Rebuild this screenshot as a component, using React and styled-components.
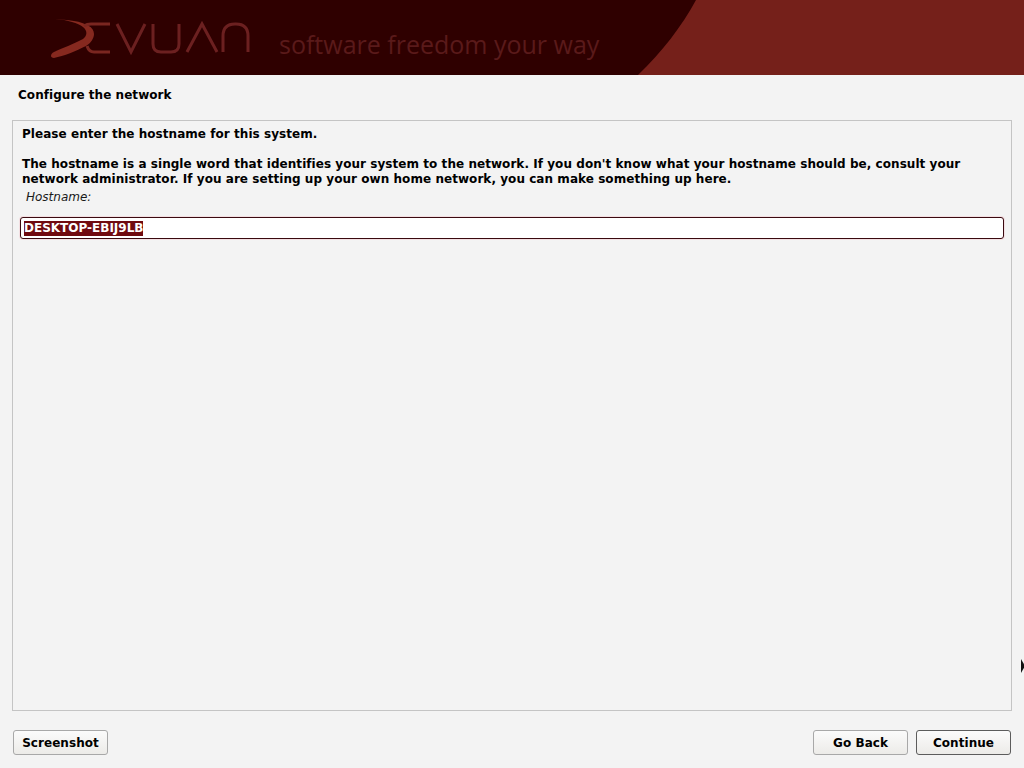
import React from 'react';
import styled, { createGlobalStyle } from 'styled-components';

const GlobalStyle = createGlobalStyle`
  html, body {
    margin: 0;
    padding: 0;
    background: #f3f3f3;
  }
  body {
    font-family: "DejaVu Sans", sans-serif;
    color: #000;
  }
`;

const Page = styled.div`
  position: relative;
  display: flex;
  flex-direction: column;
  width: 1024px;
  height: 768px;
  overflow: hidden;
  background: #f3f3f3;
`;

const Banner = styled.header`
  position: relative;
  flex: none;
  display: flex;
  align-items: flex-start;
  height: 75px;
  background: #2f0000;
  overflow: hidden;
`;

const BannerCurve = styled.svg`
  position: absolute;
  top: 0;
  right: 0;
`;

const Logo = styled.svg`
  flex: none;
  margin: 16px 0 0 49px;
`;

const Tagline = styled.span`
  position: relative;
  margin: 28px 0 0 26px;
  font-family: "Open Sans", sans-serif;
  font-size: 25px;
  line-height: 33px;
  color: #5a1a1a;
`;

const SectionTitle = styled.h1`
  flex: none;
  margin: 0;
  padding: 12px 0 0 18px;
  height: 33px;
  font-size: 12px;
  font-weight: 700;
  line-height: 16px;
  letter-spacing: 0.05px;
`;

const Panel = styled.main`
  flex: none;
  box-sizing: border-box;
  height: 591px;
  margin: 0 12px;
  padding: 6px 7px 0 9px;
  border: 1px solid #c4c4c4;
`;

const Paragraph = styled.p`
  margin: 0 0 15px;
  font-size: 12px;
  font-weight: 700;
  line-height: 15px;
  letter-spacing: 0.05px;
`;

const FieldLabel = styled.label`
  display: block;
  margin: -12px 0 0 4px;
  font-size: 12px;
  font-style: italic;
  line-height: 15px;
  color: #1a1a1a;
`;

const HostInput = styled.div`
  box-sizing: border-box;
  display: flex;
  align-items: center;
  height: 22px;
  margin: 12px 0 0 -2px;
  padding-left: 3px;
  background: #fff;
  border: 1px solid #3a0a10;
  border-radius: 3px;
  box-shadow: 0 0 0 1px #f3dfe2;
`;

const Selected = styled.span`
  font-size: 12px;
  font-weight: 700;
  line-height: 15px;
  color: #fff;
  background: #700a10;
`;

const Footer = styled.footer`
  flex: 1;
  display: flex;
  align-items: flex-start;
  justify-content: space-between;
  padding: 19px 13px 0;
`;

const ButtonGroup = styled.div`
  display: flex;
  gap: 8px;
`;

const Button = styled.button`
  box-sizing: border-box;
  width: 95px;
  height: 25px;
  padding: 0;
  font-family: "DejaVu Sans", sans-serif;
  font-size: 12px;
  font-weight: 700;
  letter-spacing: 0.05px;
  color: #000;
  background: linear-gradient(#fbfbfb, #ecebe8);
  border: 1px solid ${({ $focused }) => ($focused ? '#5c5c5c' : '#a8a8a8')};
  border-radius: 3px;
`;

const CursorMark = styled.span`
  position: absolute;
  right: -1px;
  top: 659px;
  width: 0;
  height: 0;
  border-top: 7px solid transparent;
  border-bottom: 7px solid transparent;
  border-left: 4px solid #111;
`;

const App = () => (
  <Page>
    <GlobalStyle />
    <Banner>
      <BannerCurve width="400" height="75" viewBox="624 0 400 75">
        <path d="M696 0 C682 26 662 52 638 75 L1024 75 L1024 0 Z" fill="#75201a" />
      </BannerCurve>
      <Logo width="204" height="46" viewBox="49 16 204 46" fill="none" stroke="#6c2020" strokeWidth="3">
        <path d="M55 19 C68 20 78 23 83 27 C88 31 87 36 83 39 C74 44 62 48 54 52 C50 54 50 58 54 58 C64 56 76 51 86 46 C91 43 94 38 94 34 C94 27 86 23 74 21 C67 20 60 19 55 19 Z" fill="#86291f" stroke="none" />
        <path d="M84 26 Q87 24 91 24 L110 24 M87 46 Q89 52 94 52 L110 52" stroke="#7a2620" />
        <path d="M117 24 L131 52 L145 24" />
        <path d="M153 24 L153 44 Q153 52 161 52 L171 52 Q179 52 179 44 L179 24" />
        <path d="M187 52 L202 24 L217 52" />
        <path d="M223 52 L223 36 Q223 24 235 24 L236 24 Q248 24 248 36 L248 52" />
      </Logo>
      <Tagline>software freedom your way</Tagline>
    </Banner>

    <SectionTitle>Configure the network</SectionTitle>

    <Panel>
      <Paragraph>Please enter the hostname for this system.</Paragraph>
      <Paragraph>
        The hostname is a single word that identifies your system to the network. If you don't know what your hostname should be, consult your network administrator. If you are setting up your own home network, you can make something up here.
      </Paragraph>
      <FieldLabel>Hostname:</FieldLabel>
      <HostInput>
        <Selected>DESKTOP-EBIJ9LB</Selected>
      </HostInput>
    </Panel>

    <Footer>
      <Button>Screenshot</Button>
      <ButtonGroup>
        <Button>Go Back</Button>
        <Button $focused>Continue</Button>
      </ButtonGroup>
    </Footer>
    <CursorMark />
  </Page>
);

export default App;
